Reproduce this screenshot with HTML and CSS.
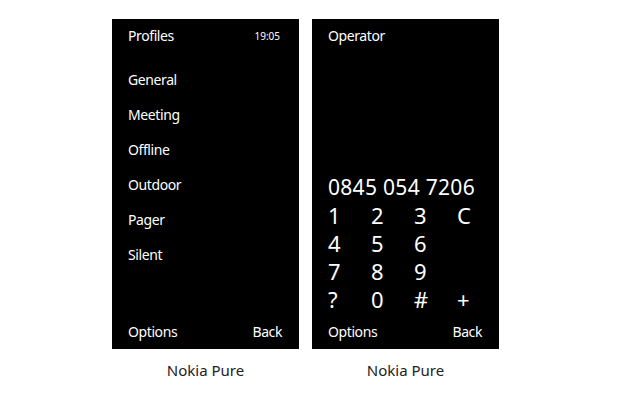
FILE: index.html
```html
<!DOCTYPE html>
<html>
<head>
<meta charset="utf-8">
<link rel="stylesheet" href="styles.css">
</head>
<body>
<div class="row">
  <div class="col">
    <div class="phone">
      <div class="head"><span>Profiles</span><span class="clock">19:05</span></div>
      <ul class="menu">
        <li>General</li>
        <li>Meeting</li>
        <li>Offline</li>
        <li>Outdoor</li>
        <li>Pager</li>
        <li>Silent</li>
      </ul>
      <div class="foot"><span>Options</span><span>Back</span></div>
    </div>
    <div class="caption">Nokia Pure</div>
  </div>
  <div class="col">
    <div class="phone">
      <div class="head"><span>Operator</span></div>
      <div class="number">0845 054 7206</div>
      <div class="keys">
        <span>1</span><span>2</span><span>3</span><span>C</span>
        <span>4</span><span>5</span><span>6</span><span></span>
        <span>7</span><span>8</span><span>9</span><span></span>
        <span>?</span><span>0</span><span>#</span><span>+</span>
      </div>
      <div class="foot"><span>Options</span><span>Back</span></div>
    </div>
    <div class="caption">Nokia Pure</div>
  </div>
</div>
</body>
</html>
```
FILE: styles.css
```css
html, body {
  margin: 0;
  padding: 0;
  background: #fff;
}
body {
  font-family: "Noto Sans", "Open Sans", sans-serif;
}
.row {
  display: flex;
  gap: 13px;
  padding: 19px 0 0 112px;
}
.col {
  display: flex;
  flex-direction: column;
  width: 187px;
}
.phone {
  height: 330px;
  background: #000;
  color: #fff;
  display: flex;
  flex-direction: column;
  padding: 0 17px 0 16px;
  font-size: 14px;
  letter-spacing: -0.4px;
}
.head {
  height: 34px;
  line-height: 34px;
  display: flex;
  justify-content: space-between;
  align-items: center;
}
.clock {
  font-size: 10px;
  letter-spacing: 0;
  margin-right: 2px;
}
.menu {
  list-style: none;
  margin: 9px 0 0 0;
  padding: 0;
}
.menu li {
  height: 35px;
  line-height: 35px;
}
.number {
  margin-top: auto;
  height: 28px;
  line-height: 28px;
  font-size: 21px;
  letter-spacing: 0.3px;
}
.keys {
  display: grid;
  grid-template-columns: repeat(4, 43px);
  grid-auto-rows: 28px;
  line-height: 28px;
  font-size: 22px;
  letter-spacing: 0;
  margin-bottom: 2px;
}
.foot {
  margin-top: auto;
  height: 34px;
  line-height: 34px;
  display: flex;
  justify-content: space-between;
}
.keys + .foot {
  margin-top: 0;
}
.caption {
  margin-top: 10px;
  text-align: center;
  font-size: 15px;
  line-height: 22px;
  color: #222;
}
```
